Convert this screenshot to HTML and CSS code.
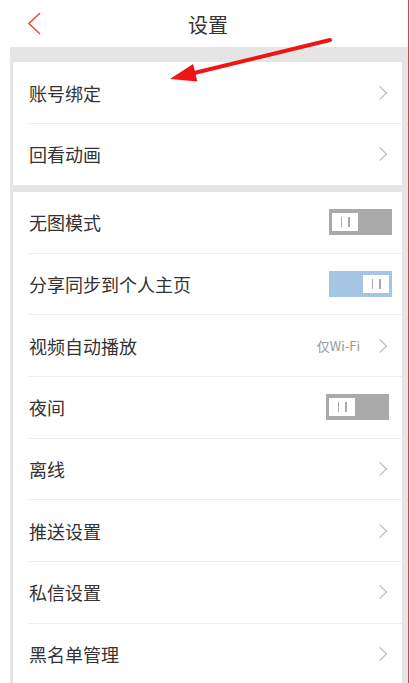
FILE: index.html
```html
<!DOCTYPE html>
<html lang="zh">
<head>
<meta charset="utf-8">
<title>设置</title>
<link rel="stylesheet" href="styles.css">
</head>
<body>
<div class="frame">
  <header class="nav">
    <svg class="back" width="14" height="24" viewBox="0 0 14 24"><polyline points="12,1 1,11.5 12,22" fill="none" stroke="#e5534f" stroke-width="1.6"/></svg>
    <h1 class="title">设置</h1>
  </header>
  <div class="content">
    <section class="group">
      <div class="row"><div class="row-inner"><span class="label">账号绑定</span><span class="chev"></span></div></div>
      <div class="row"><div class="row-inner"><span class="label">回看动画</span><span class="chev"></span></div></div>
    </section>
    <section class="group">
      <div class="row"><div class="row-inner"><span class="label">无图模式</span><span class="toggle"><span class="knob"></span></span></div></div>
      <div class="row"><div class="row-inner"><span class="label">分享同步到个人主页</span><span class="toggle on"><span class="knob"></span></span></div></div>
      <div class="row"><div class="row-inner"><span class="label">视频自动播放</span><span class="value">仅Wi-Fi</span><span class="chev"></span></div></div>
      <div class="row"><div class="row-inner"><span class="label">夜间</span><span class="toggle shift"><span class="knob"></span></span></div></div>
      <div class="row"><div class="row-inner"><span class="label">离线</span><span class="chev"></span></div></div>
      <div class="row"><div class="row-inner"><span class="label">推送设置</span><span class="chev"></span></div></div>
      <div class="row"><div class="row-inner"><span class="label">私信设置</span><span class="chev"></span></div></div>
      <div class="row"><div class="row-inner"><span class="label">黑名单管理</span><span class="chev"></span></div></div>
    </section>
  </div>
</div>
<svg class="annot" width="410" height="120" viewBox="0 0 410 120">
  <line x1="330" y1="40" x2="192" y2="73.5" stroke="#f01414" stroke-width="4" stroke-linecap="round"/>
  <polygon points="170,79 197.3,81.5 193.1,64.1" fill="#f01414"/>
</svg>
</body>
</html>
```

FILE: styles.css
```css
html, body {
  margin: 0;
  padding: 0;
  background: #ffffff;
}
body {
  font-family: "Noto Sans CJK SC", "Noto Sans", sans-serif;
  color: #333333;
  height: 683px;
  overflow: hidden;
  position: relative;
}
.frame {
  margin-left: 10px;
  width: 398px;
  min-height: 683px;
  background: #e5e5e5;
  border-right: 1.5px solid #d9403c;
}
.nav {
  height: 47px;
  background: #ffffff;
  display: flex;
  align-items: center;
  justify-content: center;
  position: relative;
}
.back {
  position: absolute;
  left: 18px;
  top: 12px;
}
.title {
  margin: 2px 0 0 -2px;
  font-size: 20px;
  font-weight: 400;
  color: #333;
}
.content {
  padding-top: 15px;
  display: flex;
  flex-direction: column;
  gap: 7px;
}
.group {
  background: #ffffff;
  margin: 0 6px 0 3px;
}
.row {
  padding-left: 16px;
  display: flex;
}
.row-inner {
  flex: 1;
  height: 61px;
  display: flex;
  align-items: center;
  padding-right: 15px;
}
.row + .row .row-inner {
  border-top: 1px solid #ececec;
  height: 60.7px;
}
.label {
  flex: 1;
  font-size: 18px;
  color: #333;
}
.value {
  font-size: 13px;
  color: #999;
  margin-right: 15px;
}
.chev {
  width: 9px;
  height: 9px;
  border-top: 1.3px solid #b4b4b4;
  border-right: 1.3px solid #b4b4b4;
  transform: rotate(45deg);
  margin-right: 2px;
}
.toggle {
  width: 63px;
  height: 26px;
  box-sizing: border-box;
  background: #aaaaaa;
  padding: 4px 3px;
  margin-right: -5px;
  display: flex;
}
.toggle.on {
  background: #a6c4e4;
  justify-content: flex-end;
}
.toggle.shift {
  margin-right: -2px;
}
.knob {
  width: 26px;
  height: 18px;
  background: #ffffff;
  display: flex;
  align-items: center;
  justify-content: center;
  gap: 6px;
}
.knob::before, .knob::after {
  content: "";
  width: 1.5px;
  height: 10px;
  background: #aaaaaa;
}
.annot {
  position: absolute;
  left: 0;
  top: 0;
  pointer-events: none;
}
```
